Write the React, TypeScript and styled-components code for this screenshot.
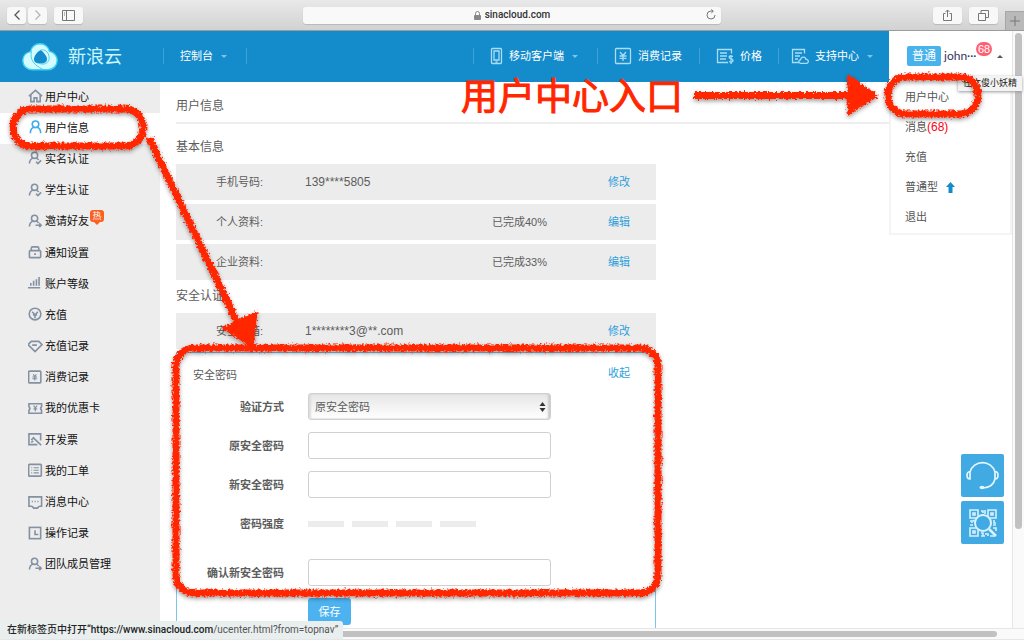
import React from "react";
import styled, { createGlobalStyle, css } from "styled-components";

const GlobalStyle = createGlobalStyle`
  * { box-sizing: border-box; }
  html, body { margin: 0; padding: 0; }
  body {
    font-family: "Liberation Sans", "Noto Sans CJK SC", sans-serif;
    font-size: 11px;
    line-height: 16px;
    color: #5c5c5c;
    background: #fff;
  }
  button, input, select { font: inherit; color: inherit; margin: 0; }
  a { color: inherit; text-decoration: none; }
  ul { list-style: none; margin: 0; padding: 0; }
  h1, h2, h3, p { margin: 0; font-weight: 400; }
`;

const Window = styled.div`
  position: relative;
  display: flex;
  flex-direction: column;
  height: 100vh;
  overflow: hidden;
`;

/* ---------- browser toolbar ---------- */

const Toolbar = styled.div`
  display: grid;
  grid-template-columns: 1fr 418px 1fr;
  align-items: center;
  flex: none;
  height: 31px;
  background: linear-gradient(#e9e9e9, #d2d2d2);
  border-bottom: 1px solid #9c9c9c;
`;

const ToolGroup = styled.div<{ $end?: boolean }>`
  display: flex;
  align-items: center;
  height: 30px;
  gap: 7px;
  padding-left: ${(p) => (p.$end ? 0 : 7)}px;
  justify-content: ${(p) => (p.$end ? "flex-end" : "flex-start")};
`;

const ToolPair = styled.div`
  display: flex;
  gap: 2px;
`;

const ToolButton = styled.button<{ $wide?: boolean }>`
  display: flex;
  align-items: center;
  justify-content: center;
  width: ${(p) => (p.$wide ? 29 : 19)}px;
  height: 17px;
  padding: 0;
  border: 0;
  border-radius: 3px;
  background: #f8f8f8;
  box-shadow: 0 1px 1px #b9b9b9;
`;

const NewTab = styled.button`
  display: flex;
  align-items: center;
  justify-content: center;
  align-self: flex-end;
  width: 19px;
  height: 19px;
  padding: 0;
  border: 1px solid #a6a6a6;
  border-width: 1px 0 0 1px;
  background: #b9b9b9;
`;

const AddressBar = styled.div`
  display: flex;
  align-items: center;
  justify-content: center;
  gap: 4px;
  position: relative;
  height: 17px;
  border-radius: 3px;
  background: #f9f9f9;
  box-shadow: 0 1px 1px #b9b9b9;
  font: 500 10px/16px Roboto, sans-serif;
  color: #333;
`;

const Reload = styled.button`
  position: absolute;
  right: 4px;
  top: 2px;
  display: flex;
  padding: 0;
  border: 0;
  background: none;
`;

/* ---------- scroll frame ---------- */

const Frame = styled.div`
  display: grid;
  grid-template-columns: minmax(0, 1fr) 12px;
  grid-template-rows: minmax(0, 1fr) 12px;
  flex: 1;
  min-height: 0;
`;

const Page = styled.div`
  position: relative;
  isolation: isolate;
  display: flex;
  flex-direction: column;
  min-height: 0;
  overflow: hidden;
`;

const VerticalTrack = styled.div`
  padding: 2px 2px 99px;
  background: #fafafa;
  border-left: 1px solid #e6e6e6;
`;

const HorizontalTrack = styled.div`
  grid-column: 1 / 3;
  padding: 2px 27px 2px 2px;
  background: #fafafa;
  border-top: 1px solid #e6e6e6;
  border-bottom: 1px solid #e6e6e6;
`;

const Thumb = styled.div`
  width: 100%;
  height: 100%;
  border-radius: 4px;
  background: #c1c1c1;
`;

/* ---------- site header ---------- */

const Header = styled.header`
  display: flex;
  flex: none;
  height: 51px;
  background: #148bcb;
  color: #fff;
`;

const Brand = styled.a`
  display: flex;
  align-items: center;
  gap: 10px;
  width: 163px;
  padding-left: 22px;
  font-size: 18px;
  line-height: 26px;
  color: #c9f6ff;
`;

const HeaderNav = styled.nav`
  display: flex;
  align-items: center;
  flex: 1;
  padding-bottom: 2px;
`;

const HeaderItem = styled.a<{ $width: number; $push?: boolean; $last?: boolean }>`
  display: flex;
  align-items: center;
  width: ${(p) => p.$width}px;
  height: 16px;
  padding-left: ${(p) => (p.$last ? 12 : 16)}px;
  gap: 6px;
  border-left: 1px solid #3fa3da;
  ${(p) => p.$push && css`margin-left: auto;`}
`;

const HeaderEdge = styled.span`
  width: 1px;
  height: 16px;
  background: #3fa3da;
`;

const Caret = styled.span<{ $up?: boolean }>`
  width: 0;
  height: 0;
  margin: 2px 0 0 2px;
  border: 3px solid transparent;
  ${(p) =>
    p.$up
      ? css`border-bottom-color: #555; border-top-width: 0;`
      : css`border-top-color: #7cc6ec; border-bottom-width: 0;`}
`;

const Account = styled.div`
  position: relative;
  width: 123px;
  background: #fff;
  color: #555;
`;

const AccountButton = styled.button`
  display: flex;
  align-items: center;
  width: 100%;
  height: 51px;
  padding: 0 9px 2px 18px;
  border: 0;
  background: none;
  color: #33335f;
  text-align: left;
`;

const Level = styled.span`
  width: 34px;
  margin-right: 3px;
  border-radius: 2px;
  background: #48b2ec;
  color: #fff;
  font-size: 12px;
  line-height: 20px;
  text-align: center;
`;

const UserName = styled.span`
  flex: 1;
  font-family: Lato, sans-serif;
  font-size: 12px;
`;

const Count = styled.span`
  position: absolute;
  left: 87px;
  top: 11px;
  padding: 0 2px;
  border-radius: 8px;
  background: #ff5f72;
  color: #fff;
  font: 11px/14px "Liberation Sans", sans-serif;
`;

const AccountMenu = styled.ul`
  position: absolute;
  z-index: 2;
  top: 51px;
  left: 0;
  width: 100%;
  padding-bottom: 1px;
  background: #fff;
  border: 2px solid #f4f4f4;
  border-top: 0;

  li { height: 30px; padding: 7px 0 0 14px; }
  a { display: flex; align-items: center; }
  em { font-style: normal; color: #ff0010; font-size: 12px; }
  svg { margin-left: 8px; }
`;

/* ---------- sidebar ---------- */

const Body = styled.div`
  display: flex;
  flex: 1;
  min-height: 0;
`;

const Sidebar = styled.nav`
  display: flex;
  flex: none;
  width: 160px;
  padding-bottom: 47px;
  background: #ededed;
`;

const SideList = styled.ul`
  display: grid;
  flex: 1;
  grid-auto-rows: 1fr;
`;

const SideItem = styled.li<{ $active?: boolean }>`
  display: flex;
  background: ${(p) => (p.$active ? "#fff" : "transparent")};
  color: #111;

  a {
    display: flex;
    align-items: center;
    flex: 1;
    gap: 2px;
    padding: 0 0 2px 28px;
  }
  svg { color: ${(p) => (p.$active ? "#41ade8" : "#8491a3")}; }
`;

const Hot = styled.span`
  position: relative;
  align-self: flex-start;
  width: 14px;
  margin: 3px 0 0 -1px;
  border-radius: 3px;
  background: #fb6020;
  color: #fff;
  font-size: 9px;
  line-height: 12px;
  text-align: center;

  &::after {
    content: "";
    position: absolute;
    left: 4px;
    top: 12px;
    border: 3px solid transparent;
    border-top-color: #fb6020;
    border-bottom-width: 0;
  }
`;

/* ---------- content ---------- */

const Main = styled.main`
  flex: 1;
  min-width: 0;
  padding-left: 16px;
  overflow: hidden;
`;

const PageTitle = styled.h1`
  height: 42px;
  padding-top: 16px;
  border-bottom: 2px solid #eee;
  font-size: 12px;
`;

const Section = styled.section`
  max-width: 480px;
`;

const SectionTitle = styled.h2<{ $first?: boolean }>`
  height: ${(p) => (p.$first ? 40 : 29)}px;
  padding-top: ${(p) => (p.$first ? 15 : 4)}px;
  font-size: 12px;
`;

const InfoRow = styled.div`
  display: grid;
  grid-template-columns: 89px 187px 116px 1fr;
  align-items: center;
  height: 36px;
  margin-bottom: 4px;
  padding-left: 40px;
  background: #ececec;
`;

const Value = styled.span`
  font-size: 12px;
`;

const ActionLink = styled.a`
  color: #2f9fdc;
`;

const PasswordPanel = styled.form`
  margin-top: -1px;
  padding-bottom: 40px;
  border: 1px solid #7cc6ee;
`;

const PanelHead = styled.div`
  display: grid;
  grid-template-columns: 415px 1fr;
  align-items: start;
  height: 40px;
  padding: 12px 0 0 16px;

  h3 { font-size: 11px; line-height: 20px; }
`;

const Fields = styled.div`
  display: grid;
  gap: 12px;
`;

const Field = styled.div<{ $tall?: boolean }>`
  display: grid;
  grid-template-columns: 107px 243px;
  column-gap: 24px;
  align-items: center;
  height: 27px;
  margin-bottom: ${(p) => (p.$tall ? 10 : 0)}px;
`;

const FieldLabel = styled.label`
  font-weight: 700;
  text-align: right;
`;

const TextBox = styled.input`
  width: 100%;
  height: 27px;
  padding: 0 6px;
  border: 1px solid #d0d0d0;
  border-radius: 3px;
  background: #fff;
`;

const SelectWrap = styled.div`
  position: relative;

  svg { position: absolute; right: 5px; top: 9px; pointer-events: none; }
`;

const Select = styled.select`
  display: block;
  width: 100%;
  height: 27px;
  padding: 0 6px;
  appearance: none;
  border: 1px solid #d0d0d0;
  border-radius: 3px;
  background: linear-gradient(#e6e6e6, #fff);
  box-shadow: inset 2px 0 2px #ddd, inset -2px 0 2px #ccc;
`;

const Strength = styled.div`
  display: flex;
  gap: 8px;

  span { width: 36px; height: 6px; background: #ececec; }
`;

const SaveButton = styled.button`
  grid-column: 2;
  justify-self: start;
  width: 43px;
  height: 27px;
  padding: 0;
  border: 0;
  border-radius: 3px;
  background: #4db3f0;
  color: #fff;
`;

/* ---------- overlays ---------- */

const FloatTools = styled.div`
  position: absolute;
  right: 8px;
  bottom: 84px;
  display: grid;
  gap: 4px;
`;

const FloatButton = styled.button`
  display: flex;
  align-items: center;
  justify-content: center;
  width: 43px;
  height: 43px;
  padding: 0;
  border: 0;
  border-radius: 2px;
  background: #41aae3;
`;

const StatusBubble = styled.div`
  position: absolute;
  left: 0;
  bottom: 1px;
  padding: 0 5px 0 7px;
  border-radius: 0 3px 0 0;
  background: #e9eeee;
  color: #555;
  font: 10px/18px Roboto, "Noto Sans CJK SC", sans-serif;
  white-space: nowrap;

  b { font-weight: 500; color: #222; }
`;

const Tooltip = styled.div`
  position: absolute;
  right: 2px;
  top: 76px;
  padding: 0 5px;
  background: #f3f3f3;
  box-shadow: 0 1px 3px #999;
  color: #222;
  font-size: 9px;
  line-height: 15px;
`;

const LeftMarks = styled.svg`
  position: absolute;
  left: 0;
  top: 0;
  pointer-events: none;
`;

const RightMarks = styled.svg`
  position: absolute;
  right: 0;
  top: 60px;
  pointer-events: none;
`;

const MarkText = styled.p`
  position: absolute;
  right: 341px;
  top: 76px;
  color: #ff2600;
  font-size: 37px;
  line-height: 44px;
  white-space: nowrap;
  -webkit-text-stroke: 1px #ff2600;
`;

/* ---------- icons ---------- */

const userShape = (
  <>
    <circle cx="7" cy="4.6" r="3.3" />
    <path d="M1.6 13.2c0-3 1.7-4.9 3.6-5.6M8.8 7.6c1.1.4 2 1 2.6 2" />
  </>
);

const icons: Record<string, React.ReactNode> = {
  home: <path d="M1 7.5 8 1.5l7 6M3 6.5v7h3.500v-4h3v4H13v-7" />,
  user: (
    <>
      <circle cx="8" cy="4.6" r="3.500" />
      <path d="M2.5 14c0-3.500 2-5.700 4-6.200M9.500 7.800c2 .5 4 2.700 4 6.200" />
    </>
  ),
  check: <>{userShape}<path d="m8.500 11.500 2 2 3.500-3.500" /></>,
  invite: <>{userShape}<path d="M8 12h6M12 10l2 2-2 2" /></>,
  lock: (
    <>
      <rect x="1.5" y="6" width="12" height="7.5" rx="1" />
      <path d="M3.500 6V3.500q0-1.500 1.500-1.500h5q1.500 0 1.500 1.500V6M6.500 9.700h2" />
    </>
  ),
  bars: <path d="M0 12.500h13M3 10.500V7.500M6 10.500V5M9 10.500V3.500M11.800 10.500V1" />,
  coin: <><circle cx="7.500" cy="7.500" r="6.200" /><path d="m4.500 5 3 3.500 3-3.500M7.500 8v4M5.300 8.500h4.400" /></>,
  gem: <path d="M3.500 2.500h8l3.500 3.500-7.500 7.500L0 6zM4.500 6.500h5" />,
  bill: <><rect x="0.700" y="1.200" width="13" height="12.500" rx="1" /><path d="m5.500 4.500 1.700 2.500 1.700-2.500M4.700 7.500h5M4.700 9.300h5M7.200 7v4.300" strokeWidth="1.200" /></>,
  coupon: <><path d="M1 3h13.500v3q-2 2 0 4v3H1v-3q2-2 0-4z" /><path d="m6 5 1.800 2.500L9.600 5M7.800 7.500V11M5.800 8.500h4" strokeWidth="1.300" /></>,
  invoice: <path d="M13.500 9V2H1v11.500h9M3.500 8.500l3-3M3.500 11l2-1.500M5.500 6l8.500 8" />,
  ticket: <><rect x="0.700" y="1.500" width="13.500" height="12.500" rx="1" /><path d="M3.500 5h1M6 5h5.500M3.500 7.700h1M6 7.700h5.500M3.500 10.500h1M6 10.500h5.500" strokeWidth="1.200" /></>,
  message: <><path d="M4.500 12H1V2h13.500v10H12M4.500 12l1.500 2h4l2-2" /><path d="M4 7h1.200M7 7h1.200M10 7h1.200" /></>,
  clock: <><rect x="1.500" y="1.500" width="12" height="12" /><path d="M7.500 4.500V9H11" /></>,
};

const Icon = ({ name }: { name: string }) => (
  <svg width="15" height="15" viewBox="0 0 16 16" fill="none" stroke="currentColor" strokeWidth="1.7" aria-hidden="true">
    {icons[name]}
  </svg>
);

const HeaderIcon = ({ children, width = 18 }: { children: React.ReactNode; width?: number }) => (
  <svg width={width} height="18" viewBox={`0 0 ${width} 18`} fill="none" stroke="#a9ddf6" strokeWidth="1.300" aria-hidden="true">
    {children}
  </svg>
);

const CloudLogo = () => (
  <svg width="36" height="28" viewBox="0 0 36 28" aria-hidden="true">
    <path
      d="M18 .8c5 0 8.700 3.200 9.400 7.600 4.500.7 7.800 4.400 7.800 9 0 5.400-4.200 9.400-9.600 9.400H10.400C5 26.800.8 22.800.8 17.800c0-4.700 3.200-8.300 7.800-9.200C9.200 4 13 .8 18 .8z"
      fill="#d2fcff" stroke="#3dd0f2" strokeWidth="1.400"
    />
    <path d="M18.500 7c2.500 1.500 6.500 6 6.500 9s-2.500 4.500-6.500 4.500S12 19.500 12 16s4-7.500 6.500-9z" fill="#148bcb" />
    <path d="M9.500 8.500c-2 7.500 2.500 14 11 17.500M18.500 7c5-1 9.500 3 8.500 9.500-1 4-5 5.500-9.500 4" fill="none" stroke="#4fd0ee" strokeWidth="1" />
  </svg>
);

const RoughFilter = ({ id }: { id: string }) => (
  <filter id={id} filterUnits="userSpaceOnUse" x="0" y="0" width="1024" height="640">
    <feTurbulence type="fractalNoise" baseFrequency="0.45" numOctaves="2" seed="4" result="noise" />
    <feDisplacementMap in="SourceGraphic" in2="noise" scale="6" xChannelSelector="R" yChannelSelector="G" result="rough" />
    <feDropShadow in="rough" dx="0" dy="2" stdDeviation="2" floodColor="#000" floodOpacity="0.4" />
  </filter>
);

const sideItems: { icon: string; label: string; active?: boolean; hot?: boolean }[] = [
  { icon: "home", label: "用户中心" },
  { icon: "user", label: "用户信息", active: true },
  { icon: "check", label: "实名认证" },
  { icon: "check", label: "学生认证" },
  { icon: "invite", label: "邀请好友", hot: true },
  { icon: "lock", label: "通知设置" },
  { icon: "bars", label: "账户等级" },
  { icon: "coin", label: "充值" },
  { icon: "gem", label: "充值记录" },
  { icon: "bill", label: "消费记录" },
  { icon: "coupon", label: "我的优惠卡" },
  { icon: "invoice", label: "开发票" },
  { icon: "ticket", label: "我的工单" },
  { icon: "message", label: "消息中心" },
  { icon: "clock", label: "操作记录" },
  { icon: "invite", label: "团队成员管理" },
];

export default function App() {
  return (
    <Window>
      <GlobalStyle />
      <Toolbar>
        <ToolGroup>
          <ToolPair>
            <ToolButton aria-label="后退">
              <svg width="8" height="12" viewBox="0 0 8 12" fill="none" stroke="#555" strokeWidth="1.300"><path d="M6.500 1.500 2 6l4.500 4.500" /></svg>
            </ToolButton>
            <ToolButton aria-label="前进">
              <svg width="8" height="12" viewBox="0 0 8 12" fill="none" stroke="#b5b5b5" strokeWidth="1.300"><path d="M1.500 1.500 6 6l-4.500 4.500" /></svg>
            </ToolButton>
          </ToolPair>
          <ToolButton $wide aria-label="边栏">
            <svg width="13" height="11" viewBox="0 0 13 11" fill="none" stroke="#777"><path d="M.5.500h12v10H.5zM4.500.500v10M2 3h1M2 5h1" /></svg>
          </ToolButton>
        </ToolGroup>
        <AddressBar>
          <svg width="7" height="9" viewBox="0 0 7 9"><rect y="4" width="7" height="5" rx="1" fill="#888" /><path d="M1.500 4V2.500a2 2 0 0 1 4 0V4" fill="none" stroke="#888" /></svg>
          sinacloud.com
          <Reload aria-label="刷新">
            <svg width="12" height="12" viewBox="0 0 12 12" fill="none" stroke="#777"><path d="M10 6a4 4 0 1 1-4-4h2M6.300.500 8.300 2.200 6.300 4" /></svg>
          </Reload>
        </AddressBar>
        <ToolGroup $end>
          <ToolButton $wide aria-label="共享">
            <svg width="11" height="13" viewBox="0 0 11 13" fill="none" stroke="#777"><path d="M3.500 4.500h-2v7h8v-7h-2M5.500 8V1M3.500 3l2-2 2 2" /></svg>
          </ToolButton>
          <ToolButton $wide aria-label="标签页概览">
            <svg width="11" height="11" viewBox="0 0 11 11" fill="none" stroke="#777"><path d="M.5 3.500h7v7h-7zM3 3.500v-3h7.500v7H7.500" /></svg>
          </ToolButton>
          <NewTab aria-label="新标签页">
            <svg width="10" height="10" viewBox="0 0 10 10" stroke="#777"><path d="M5 0v10M0 5h10" /></svg>
          </NewTab>
        </ToolGroup>
      </Toolbar>

      <Frame>
        <Page>
          <Header>
            <Brand href="#"><CloudLogo />新浪云</Brand>
            <HeaderNav>
              <HeaderItem href="#" $width={83}>控制台<Caret /></HeaderItem>
              <HeaderEdge />
              <HeaderItem href="#" $width={124} $push>
                <HeaderIcon width={13}>
                  <rect x="1.500" y="1.500" width="10" height="15" rx="1" /><path d="M4 4h5v9H4zM5.500 15h2" />
                </HeaderIcon>
                移动客户端<Caret />
              </HeaderItem>
              <HeaderItem href="#" $width={102}>
                <HeaderIcon><rect x="1.500" y="1.500" width="15" height="15" rx="1" /><path d="m6 5 3 3.500L12 5M9 8.500V14M5.500 9h7M5.500 11.300h7" /></HeaderIcon>
                消费记录
              </HeaderItem>
              <HeaderItem href="#" $width={79}>
                <HeaderIcon>
                  <path d="M12 15.500H1.500v-13h14v4M4 6h7M4 9h7M4 12h6M17 9.500c-3-1.500-4.500 0-3.500 1.500s3.500.5 3.500 2.500-2.500 2-4 1M15 8v9" />
                </HeaderIcon>
                价格
              </HeaderItem>
              <HeaderItem href="#" $width={111} $last>
                <HeaderIcon>
                  <path d="M8 15.500H1.500v-13h12v4M4 6h7M4 9h5M4 12h3M9.500 16.300c-2.500-.5-2-3.500 0-3.500.5-3.500 5-3.500 5.500-.5 3 0 3 4 .5 4z" />
                </HeaderIcon>
                支持中心<Caret />
              </HeaderItem>
            </HeaderNav>
            <Account>
              <AccountButton>
                <Level>普通</Level>
                <UserName>john···</UserName>
                <Caret $up />
              </AccountButton>
              <Count>68</Count>
              <AccountMenu>
                <li><a href="#">用户中心</a></li>
                <li><a href="#">消息<em>(68)</em></a></li>
                <li><a href="#">充值</a></li>
                <li>
                  <a href="#">
                    普通型
                    <svg width="9" height="11" viewBox="0 0 9 11"><path d="M4.500 0 9 5H6.500v6h-4V5H0z" fill="#148bcb" /></svg>
                  </a>
                </li>
                <li><a href="#">退出</a></li>
              </AccountMenu>
            </Account>
          </Header>

          <Body>
            <Sidebar>
              <SideList>
                {sideItems.map((item) => (
                  <SideItem key={item.label} $active={item.active}>
                    <a href="#">
                      <Icon name={item.icon} />
                      {item.label}
                      {item.hot && <Hot>热</Hot>}
                    </a>
                  </SideItem>
                ))}
              </SideList>
            </Sidebar>

            <Main>
              <PageTitle>用户信息</PageTitle>
              <Section>
                <SectionTitle $first>基本信息</SectionTitle>
                <InfoRow>
                  <span>手机号码:</span><Value>139****5805</Value><span /><ActionLink href="#">修改</ActionLink>
                </InfoRow>
                <InfoRow>
                  <span>个人资料:</span><span /><span>已完成40%</span><ActionLink href="#">编辑</ActionLink>
                </InfoRow>
                <InfoRow>
                  <span>企业资料:</span><span /><span>已完成33%</span><ActionLink href="#">编辑</ActionLink>
                </InfoRow>
              </Section>
              <Section>
                <SectionTitle>安全认证</SectionTitle>
                <InfoRow>
                  <span>安全邮箱:</span><Value>1********3@**.com</Value><span /><ActionLink href="#">修改</ActionLink>
                </InfoRow>
                <PasswordPanel onSubmit={(e) => e.preventDefault()}>
                  <PanelHead>
                    <h3>安全密码</h3>
                    <ActionLink href="#">收起</ActionLink>
                  </PanelHead>
                  <Fields>
                    <Field>
                      <FieldLabel htmlFor="method">验证方式</FieldLabel>
                      <SelectWrap>
                        <Select id="method"><option>原安全密码</option></Select>
                        <svg width="7" height="10" viewBox="0 0 7 10" fill="#333"><path d="M3.500 0 6.500 4h-6zM3.500 10l3-4h-6z" /></svg>
                      </SelectWrap>
                    </Field>
                    <Field>
                      <FieldLabel htmlFor="old">原安全密码</FieldLabel>
                      <TextBox id="old" type="password" />
                    </Field>
                    <Field>
                      <FieldLabel htmlFor="new">新安全密码</FieldLabel>
                      <TextBox id="new" type="password" />
                    </Field>
                    <Field $tall>
                      <FieldLabel as="span">密码强度</FieldLabel>
                      <Strength><span /><span /><span /><span /></Strength>
                    </Field>
                    <Field>
                      <FieldLabel htmlFor="confirm">确认新安全密码</FieldLabel>
                      <TextBox id="confirm" type="password" />
                    </Field>
                    <Field>
                      <SaveButton type="submit">保存</SaveButton>
                    </Field>
                  </Fields>
                </PasswordPanel>
              </Section>
            </Main>
          </Body>

          <FloatTools>
            <FloatButton aria-label="在线客服">
              <svg width="35" height="32" viewBox="0 0 35 32" fill="none" stroke="#e4f6ff" strokeWidth="1.700">
                <path d="M5 12a13 13 0 0 1 25 0M30 19c-1 5-5.500 8.500-12 9M5 11.500c-4 0-4 7.500 0 7.500zM30 11.500c4 0 4 7.500 0 7.500z" />
                <ellipse cx="17" cy="27.500" rx="2.500" ry="1.800" fill="#e4f6ff" stroke="none" />
              </svg>
            </FloatButton>
            <FloatButton aria-label="二维码">
              <svg width="28" height="28" viewBox="0 0 28 28" fill="none" stroke="#d8f1ff" strokeWidth="1.600">
                <path d="M1 1h8v8H1zM19 1h8v8h-8zM1 19h8v8H1zM4 4h2v2H4zM22 4h2v2h-2zM4 22h2v2H4z" />
                <path d="M12 2h2v2M16 1v4M12 6h3M1 12h2v2M1 16h3M4 11l2 2M25 11v3h2M24 16h3M12 24h2v3M16 25h3v2M12 27h4M24 19h3v3M21 27h5" />
                <circle cx="14" cy="14" r="8" fill="#41aae3" strokeWidth="2" />
                <path d="m20 20 7 7" strokeWidth="2.500" />
              </svg>
            </FloatButton>
          </FloatTools>
        </Page>
        <VerticalTrack><Thumb /></VerticalTrack>
        <HorizontalTrack><Thumb /></HorizontalTrack>
      </Frame>

      <StatusBubble>
        <b>在新标签页中打开“https://www.sinacloud.com</b>/ucenter.html?from=topnav”
      </StatusBubble>
      <Tooltip role="tooltip">任文俊小妖精</Tooltip>

      <MarkText>用户中心入口</MarkText>
      <LeftMarks width="680" height="640" viewBox="0 0 680 640" fill="none" stroke="#ff2600" strokeWidth="7" aria-hidden="true">
        <RoughFilter id="rough-left" />
        <g filter="url(#rough-left)">
          <rect x="13" y="109" width="130" height="37" rx="18" />
          <path d="m149 138 91 190" />
          <path d="m224 328 32-15-4 33z" fill="#ff2600" strokeWidth="3" />
          <rect x="176" y="348" width="482" height="245" rx="18" />
        </g>
      </LeftMarks>
      <RightMarks width="344" height="70" viewBox="680 60 344 70" fill="none" stroke="#ff2600" strokeWidth="7" aria-hidden="true">
        <RoughFilter id="rough-right" />
        <g filter="url(#rough-right)">
          <path d="M694 95.500h156" />
          <path d="m849 77 27 18.500-27 18z" fill="#ff2600" strokeWidth="3" />
          <rect x="888" y="77" width="90" height="37" rx="18" />
        </g>
      </RightMarks>
    </Window>
  );
}
